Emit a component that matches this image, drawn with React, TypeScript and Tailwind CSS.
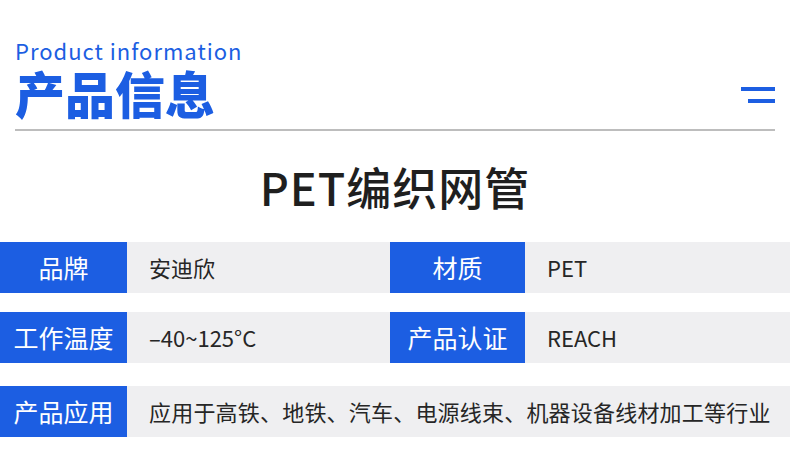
import React from 'react';

const font = { fontFamily: '"Noto Sans CJK SC", "Noto Sans", sans-serif' };

const Label: React.FC<{ text: string; className?: string }> = ({ text, className = 'w-[127px]' }) => (
    <div className={`h-full bg-[#1c5ee2] text-white text-[25px] flex items-center justify-center shrink-0 ${className}`}>
        {text}
    </div>
);

const Value: React.FC<{ text: string; className?: string }> = ({ text, className = '' }) => (
    <div className={`h-full bg-[#efeff1] text-[#262626] text-[22px] flex items-center pl-[22px] ${className}`}>
        {text}
    </div>
);

export default function App() {
    return (
        <div className="w-[790px] h-[456px] bg-white overflow-hidden" style={font}>
            <div className="px-[15px] pt-[37px]">
                <div className="flex items-end justify-between">
                    <div>
                        <div className="text-[#1c5ee2] text-[22px] leading-[26px] tracking-[1px]">Product information</div>
                        <div className="text-[#1c5ee2] text-[50px] leading-[58px] font-black">产品信息</div>
                    </div>
                    <div className="flex flex-col items-end gap-[8px] mb-[18px]">
                        <div className="w-[34px] h-[4px] bg-[#1c5ee2]" />
                        <div className="w-[27px] h-[4px] bg-[#1c5ee2]" />
                    </div>
                </div>
                <div className="h-[2px] bg-[#bdbdbd] mt-[8px]" />
            </div>

            <div className="text-center text-[#1f1f1f] text-[45px] leading-[60px] font-medium tracking-[1px] mt-[26px]">PET编织网管</div>

            <div className="flex flex-col mt-[25px]">
                <div className="flex h-[51px]">
                    <Label text="品牌" />
                    <Value text="安迪欣" className="w-[263px]" />
                    <Label text="材质" className="w-[135px]" />
                    <Value text="PET" className="flex-1" />
                </div>
                <div className="flex h-[51px] mt-[19px]">
                    <Label text="工作温度" />
                    <Value text="–40~125°C" className="w-[263px]" />
                    <Label text="产品认证" className="w-[135px]" />
                    <Value text="REACH" className="flex-1" />
                </div>
                <div className="flex h-[51px] mt-[23px]">
                    <Label text="产品应用" />
                    <Value text="应用于高铁、地铁、汽车、电源线束、机器设备线材加工等行业" className="flex-1 tracking-[0.2px]" />
                </div>
            </div>
        </div>
    );
}
